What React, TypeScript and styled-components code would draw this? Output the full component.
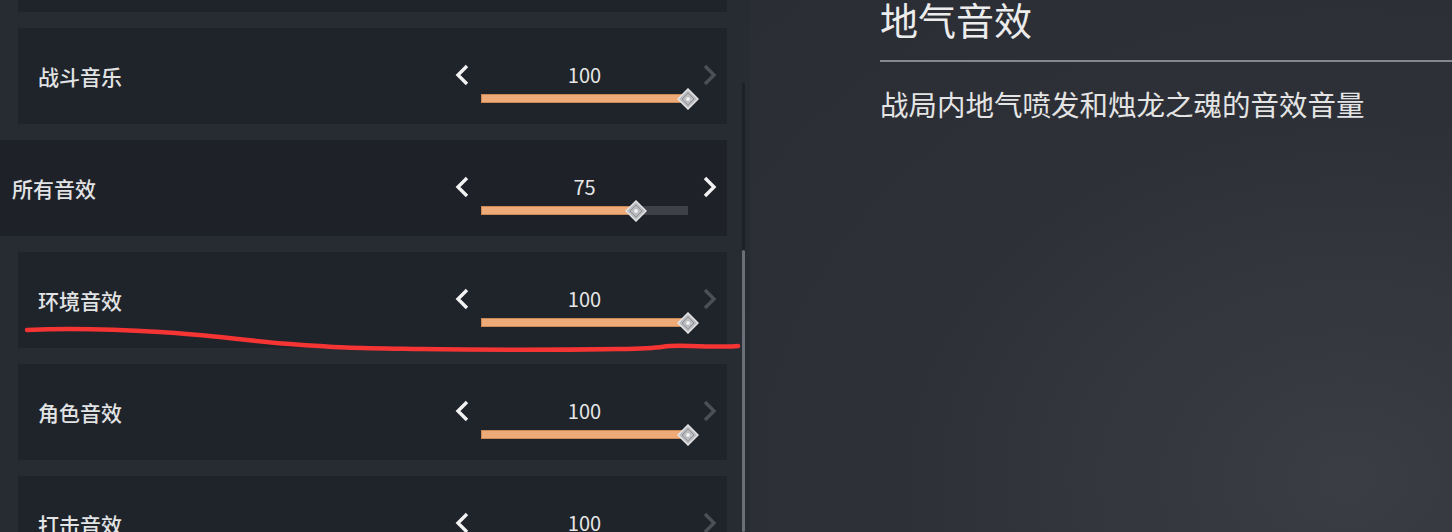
import React from 'react';
import styled, { createGlobalStyle } from 'styled-components';

const GlobalStyle = createGlobalStyle`
    html, body {
        margin:0;
        padding:0;
        background:#272b32;
        font-family:"Noto Sans CJK SC", "Noto Sans", sans-serif;
    }
`;

const Page = styled.div`
    position:relative;
    display:grid;
    grid-template-columns:750px 1fr;
    width:1452px;
    height:532px;
    overflow:hidden;
`;

const LeftPane = styled.div`
    display:flex;
    background:#272b32;
    overflow:hidden;
`;

const List = styled.div`
    display:flex;
    flex-direction:column;
    gap:16px;
    width:727px;
`;

// bottom edge of the row scrolled above the view
const RowTail = styled.div`
    flex:0 0 12px;
    margin-left:18px;
    background:#1f232a;
`;

const Row = styled.div<{ $category?: boolean }>`
    display:flex;
    align-items:center;
    justify-content:space-between;
    flex:0 0 96px;
    margin-left:${p => p.$category ? '0' : '18px'};
    padding:0 10px 0 ${p => p.$category ? '12px' : '20px'};
    background:${p => p.$category ? '#1e2128' : '#1f232a'};
`;

const Label = styled.span`
    font-size:21px;
    font-weight:500;
    color:#e2e3e5;
`;

const Control = styled.div`
    display:grid;
    grid-template-columns:26px 207px 29px;
    grid-template-rows:24px 9px;
    row-gap:7px;
    margin-top:14px;
`;

const Arrow = styled.span<{ $dim?: boolean; $right?: boolean }>`
    display:flex;
    align-items:center;
    justify-content:${p => p.$right ? 'flex-end' : 'flex-start'};
    color:${p => p.$dim ? '#4b4f56' : '#f2f2f2'};
`;

const Value = styled.span`
    text-align:center;
    font-size:20px;
    line-height:24px;
    color:#e6e6e6;
`;

const Track = styled.div`
    position:relative;
    grid-column:2;
    background:#3e4147;
`;

const Fill = styled.div`
    height:100%;
    background:#efab77;
    box-shadow:inset 0 0 0 1px #c98a58;
`;

const Thumb = styled.div`
    position:absolute;
    top:50%;
    width:22px;
    height:22px;
    transform:translate(-50%, -50%);
`;

const ScrollTrack = styled.div`
    display:flex;
    flex-direction:column;
    width:3px;
    margin:83px 0 0 15px;
    background:#1d2026;
`;

const ScrollThumb = styled.div`
    flex:1;
    margin-top:167px;
    background:#6a6e76;
    border-radius:2px;
`;

const RightPane = styled.div`
    padding-left:130px;
    background:radial-gradient(ellipse at 85% 90%, #3a3d43 0%, #2d3037 55%, #2a2d34 100%);
`;

const Title = styled.h1`
    margin:0;
    font-size:38px;
    line-height:38px;
    font-weight:400;
    color:#ececec;
`;

const Divider = styled.div`
    height:2px;
    margin-top:22px;
    background:#85888d;
`;

const Description = styled.p`
    margin:24px 0 0;
    font-size:28.5px;
    line-height:36px;
    color:#e4e4e4;
`;

const Mark = styled.svg`
    position:absolute;
    left:0;
    top:0;
    pointer-events:none;
`;

const Chevron = ({ dir }: { dir: 'left' | 'right' }) => (
    <svg width="15" height="22" viewBox="0 0 15 22">
        <polyline
            points={dir === 'left' ? '12,2 3,11 12,20' : '3,2 12,11 3,20'}
            fill="none"
            stroke="currentColor"
            strokeWidth="3.4"
            strokeLinejoin="miter"
        />
    </svg>
);

const Diamond = () => (
    <svg width="22" height="22" viewBox="0 0 22 22">
        <polygon points="11,1 21,11 11,21 1,11" fill="#b9bbbe" stroke="#e4e4e4" strokeWidth="1.5" />
        <polygon points="11,5 17,11 11,17 5,11" fill="none" stroke="#8d9094" strokeWidth="1" />
        <circle cx="11" cy="11" r="2" fill="#eeeeee" />
    </svg>
);

interface ISetting {
    label: string;
    value: number;
    category?: boolean;
}

const settings: ISetting[] = [
    { label: '战斗音乐', value: 100 },
    { label: '所有音效', value: 75, category: true },
    { label: '环境音效', value: 100 },
    { label: '角色音效', value: 100 },
    { label: '打击音效', value: 100 },
];

const Slider: React.FC<{ value: number }> = ({ value }) => (
    <Control>
        <Arrow $dim={value <= 0}><Chevron dir="left" /></Arrow>
        <Value>{value}</Value>
        <Arrow $right $dim={value >= 100}><Chevron dir="right" /></Arrow>
        <Track>
            <Fill style={{ width: `${value}%` }} />
            <Thumb style={{ left: `${value}%` }}><Diamond /></Thumb>
        </Track>
    </Control>
);

const App: React.FC = () => {
    return (
        <>
            <GlobalStyle />
            <Page>
                <LeftPane>
                    <List>
                        <RowTail />
                        {settings.map(s => (
                            <Row key={s.label} $category={s.category}>
                                <Label>{s.label}</Label>
                                <Slider value={s.value} />
                            </Row>
                        ))}
                    </List>
                    <ScrollTrack>
                        <ScrollThumb />
                    </ScrollTrack>
                </LeftPane>
                <RightPane>
                    <Title>地气音效</Title>
                    <Divider />
                    <Description>战局内地气喷发和烛龙之魂的音效音量</Description>
                </RightPane>
                <Mark width="750" height="532">
                    <path
                        d="M27 330 C 70 328, 110 329, 160 332 S 240 340, 290 344 S 360 348, 420 349 S 560 350, 620 349 S 650 345, 690 346 S 725 347, 738 346"
                        fill="none"
                        stroke="#f53434"
                        strokeWidth="4.5"
                        strokeLinecap="round"
                    />
                </Mark>
            </Page>
        </>
    );
};

export default App;
